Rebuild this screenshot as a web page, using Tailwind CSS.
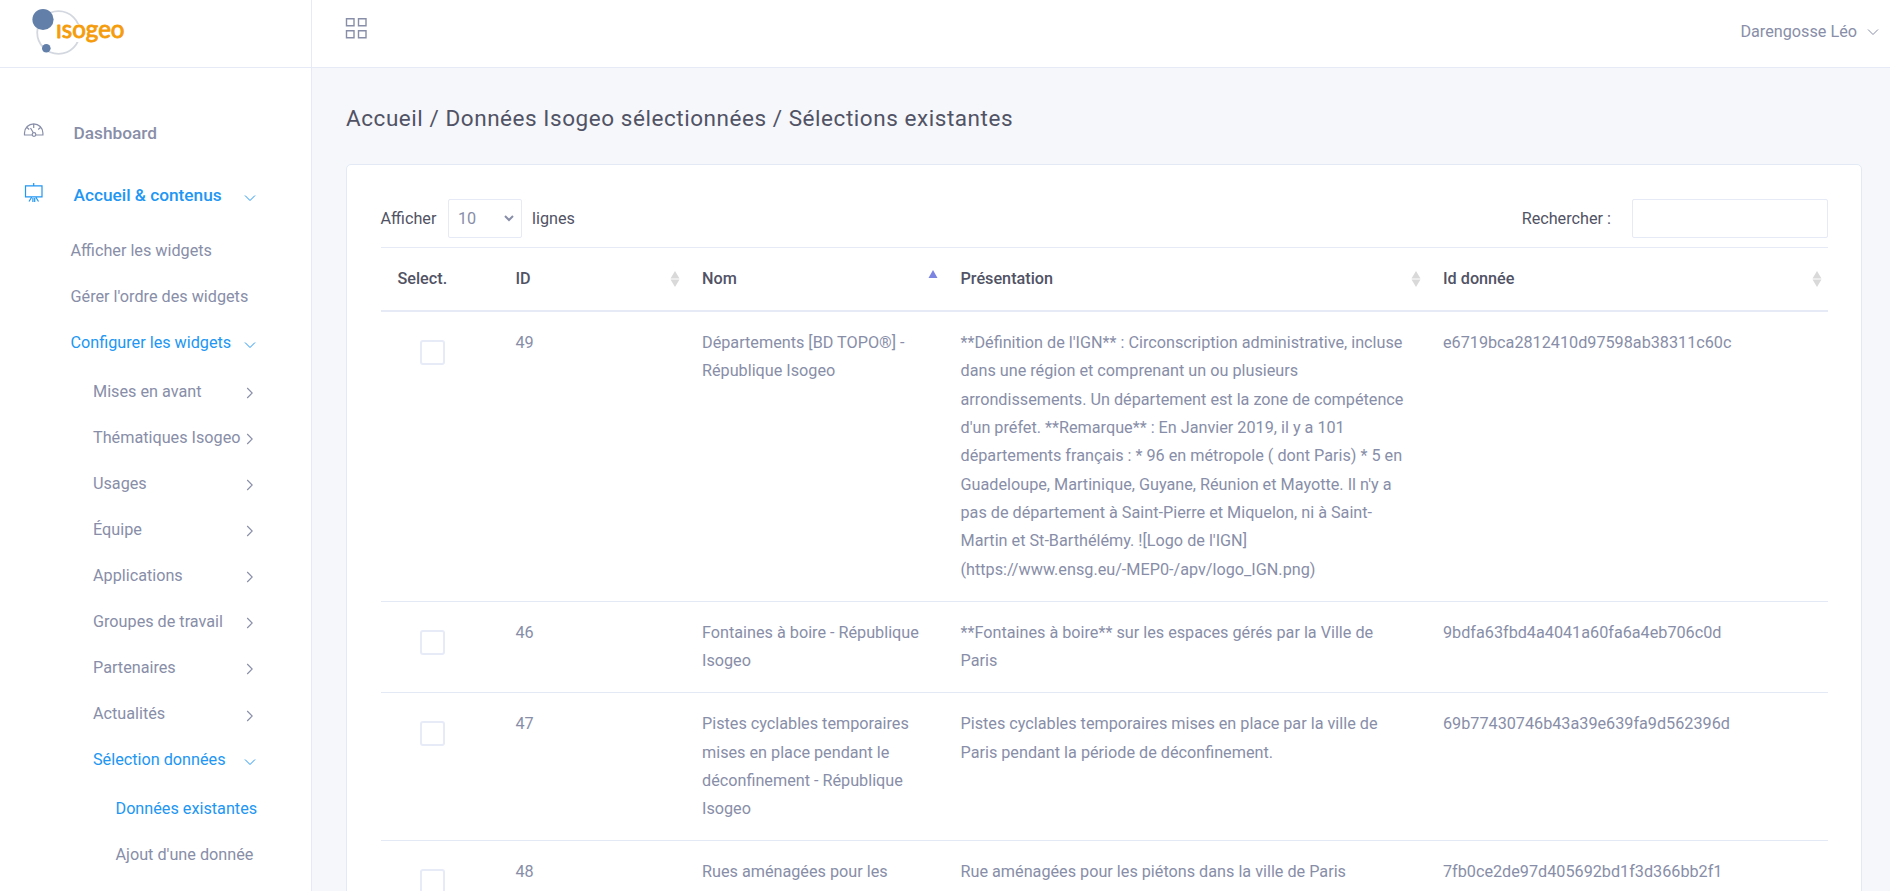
<!DOCTYPE html>
<html lang="fr">
<head>
<meta charset="utf-8">
<title>Sélections existantes</title>
<script src="https://cdn.jsdelivr.net/npm/@tailwindcss/browser@4"></script>
</head>
<body class="h-[891px] overflow-hidden bg-[#f5f7fb] font-['Roboto',sans-serif] text-[16.220px] text-[#888ea8]">
<svg class="hidden">
  <symbol id="down" viewBox="0 0 12 8"><path d="M1 1.5l5 5 5-5" fill="none" stroke="currentColor" stroke-width="1"/></symbol>
  <symbol id="right" viewBox="0 0 8 12"><path d="M1.2 1l5 5-5 5" fill="none" stroke="currentColor" stroke-width="1.1"/></symbol>
  <symbol id="sort" viewBox="0 0 10 18"><path d="M5 1l4.5 7.5h-9zM5 17L.5 9.500h9z" fill="#d9d9d9"/></symbol>
</svg>
<div class="flex h-full">
  <aside class="flex w-[312px] shrink-0 flex-col border-r border-[#e6e9f6] bg-white">
    <div class="h-[68px] shrink-0 border-b border-[#e6e9f6] pl-[28px] pt-[6px]">
      <svg class="h-[52px] w-[104px]" viewBox="28 6 104 52">
        <circle cx="58.500" cy="32.500" r="21.300" fill="none" stroke="#d3d7df" stroke-width="1.8"/>
        <path d="M56 24h72v18H56z" fill="#fff"/>
        <circle cx="43" cy="19.500" r="10.600" fill="#627fa9"/><circle cx="46.300" cy="48.300" r="4.300" fill="#627fa9"/>
        <text x="56" y="38.300" textLength="68.500" lengthAdjust="spacingAndGlyphs" font-family="Lato" font-weight="400" font-size="24.500" fill="#f59c0b" stroke="#f59c0b" stroke-width=".9" stroke-linejoin="round">ısogeo</text>
      </svg>
    </div>
    <nav class="flex flex-col">
      <a class="mt-[43px] flex h-[46px] items-center pl-[23px] text-[17.250px] font-medium">
        <svg class="-mt-[8px] h-[14px] w-[22px]" viewBox="0 0 22 14" fill="none" stroke="currentColor" stroke-width="1.2"><path d="M9 12H1.500v-2a9.200 9.200 0 0 1 18.400 0v2H13M10.700 1.500V5M4 4.500l2.200 2M17.400 4.500l-2.200 2M7.500 5l2.700 4.500"/><circle cx="11" cy="11.500" r="1.800"/></svg>
        <span class="ml-[28.500px]">Dashboard</span>
      </a>
      <a class="mt-[16px] flex h-[46px] items-center pl-[23px] text-[17.250px] font-medium text-[#2196f3]">
        <svg class="-mt-[7px] h-[20px] w-[22px]" viewBox="0 0 22 20" fill="none" stroke="currentColor" stroke-width="1.200"><path d="M2.500 2.900h16.500v11H2.500zM10.700 0v3M8.500 14.500l-2.500 4M9.900 15v4M11.700 15v4M13 14.500l2.500 4"/></svg>
        <span class="ml-[28.500px] w-[170.500px]">Accueil &amp; contenus</span><svg class="mt-[4px] h-[8px] w-[12px]"><use href="#down"/></svg>
      </a>
      <div class="mt-[9px] flex flex-col pl-[70.500px] [&>a]:flex [&>a]:h-[46.100px] [&>a]:items-center [&>a>svg]:mt-[4px]">
        <a>Afficher les widgets</a>
        <a>Gérer l'ordre des widgets</a>
        <a class="text-[#2196f3]"><span class="w-[173.500px]">Configurer les widgets</span><svg class="h-[8px] w-[12px]"><use href="#down"/></svg></a>
        <div class="mt-[2.700px] flex flex-col pl-[22.500px] [&>a]:flex [&>a]:h-[46.080px] [&>a]:items-center [&>a>span]:w-[152.500px] [&>a>span]:whitespace-nowrap [&>a>svg]:mt-[2px]">
          <a><span>Mises en avant</span><svg class="h-[12px] w-[8px]"><use href="#right"/></svg></a>
          <a><span>Thématiques Isogeo</span><svg class="h-[12px] w-[8px]"><use href="#right"/></svg></a>
          <a><span>Usages</span><svg class="h-[12px] w-[8px]"><use href="#right"/></svg></a>
          <a><span>Équipe</span><svg class="h-[12px] w-[8px]"><use href="#right"/></svg></a>
          <a><span>Applications</span><svg class="h-[12px] w-[8px]"><use href="#right"/></svg></a>
          <a><span>Groupes de travail</span><svg class="h-[12px] w-[8px]"><use href="#right"/></svg></a>
          <a><span>Partenaires</span><svg class="h-[12px] w-[8px]"><use href="#right"/></svg></a>
          <a><span>Actualités</span><svg class="h-[12px] w-[8px]"><use href="#right"/></svg></a>
          <a class="text-[#2196f3]"><span>Sélection données</span><svg class="-ml-[1.500px] h-[8px] w-[12px]"><use href="#down"/></svg></a>
          <div class="mt-[2.700px] flex flex-col pl-[22.500px] [&>a]:flex [&>a]:h-[46.100px] [&>a]:items-center">
            <a class="text-[#2196f3]">Données existantes</a>
            <a>Ajout d'une donnée</a>
          </div>
        </div>
      </div>
    </nav>
  </aside>
  <div class="flex min-w-0 flex-1 flex-col">
    <header class="flex h-[68px] shrink-0 items-start justify-between border-b border-[#e6e9f6] bg-white pl-[33px] pr-[11px]">
      <svg class="mt-[17px] h-[22px] w-[24px]" viewBox="0 0 24 22" fill="none" stroke="#888ea8" stroke-width="1.400"><path d="M1.500 1.700h7.500v7h-7.500zM13.500 1.700H21v7h-7.500zM1.500 13.700h7.500v7h-7.500zM13.500 13.700H21v7h-7.500z"/></svg>
      <div class="mt-[20px] flex items-center"><span>Darengosse Léo</span><svg class="ml-[10px] -mt-px h-[8px] w-[12px]"><use href="#down"/></svg></div>
    </header>
    <main class="flex flex-1 flex-col pl-[34px] pr-[28px]">
      <h1 class="mt-[34px] h-[62px] text-[22.500px] leading-[32px] tracking-[0.550px] text-[#515365]">Accueil / Données Isogeo sélectionnées / Sélections existantes</h1>
      <section class="h-[760px] shrink-0 rounded-[5px] border border-[#e3eaf5] bg-white px-[33.500px] pt-[34px]">
        <div class="flex h-[39px] items-center justify-between text-[#515365]">
          <div class="flex items-center"><span class="w-[67.500px] pt-px">Afficher</span>
            <div class="flex h-[39px] w-[74px] items-center justify-between rounded-[2px] border border-[#e6e9f6] pl-[9px] pr-[7px] text-[#888ea8]"><span class="pt-px">10</span><svg class="h-[7px] w-[10px]" viewBox="0 0 10 7"><path d="M1 1l4 4 4-4" fill="none" stroke="currentColor" stroke-width="2"/></svg></div>
            <span class="ml-[10px] pt-px">lignes</span></div>
          <div class="flex items-center"><span class="pt-px">Rechercher :</span><div class="ml-[20.500px] h-[39px] w-[196px] rounded-[2px] border border-[#e6e9f6]"></div></div>
        </div>
        <table class="mt-[9px] w-[1447px] table-fixed border-separate border-spacing-0 text-left leading-[28.350px] [&_td]:border-b [&_td]:border-[#e3eaf5] [&_td]:pl-[17px] [&_td]:pb-[16.700px] [&_td]:pt-[17px] [&_td]:align-top [&_th]:border-b-2 [&_th]:border-t [&_th]:border-[#e6e9f6] [&_th]:pl-[17px] [&_th]:pr-[5.500px] [&_th]:font-medium">
          <colgroup><col class="w-[118px]"><col class="w-[186.500px]"><col class="w-[258.500px]"><col class="w-[482.500px]"><col></colgroup>
          <thead class="text-[#515365]"><tr class="h-[65px]">
            <th>Select.</th>
            <th><div class="flex items-center justify-between">ID<svg class="h-[18px] w-[10px]"><use href="#sort"/></svg></div></th>
            <th><div class="flex items-center justify-between">Nom<svg class="h-[18px] w-[10px]" viewBox="0 0 10 18"><path d="M5 0l4.500 8h-9z" fill="#7b84e0"/></svg></div></th>
            <th><div class="flex items-center justify-between">Présentation<svg class="h-[18px] w-[10px]"><use href="#sort"/></svg></div></th>
            <th><div class="flex items-center justify-between">Id donnée<svg class="h-[18px] w-[10px]"><use href="#sort"/></svg></div></th>
          </tr></thead>
          <tbody>
            <tr><td><div class="ml-[22.300px] mt-[11px] size-[25px] rounded-[3px] border-2 border-[#e6ebf7]"></div></td><td>49</td><td>Départements [BD TOPO®] -<br>République Isogeo</td><td class="whitespace-nowrap">**Définition de l'IGN** : Circonscription administrative, incluse<br>dans une région et comprenant un ou plusieurs<br>arrondissements. Un département est la zone de compétence<br>d'un préfet. **Remarque** : En Janvier 2019, il y a 101<br>départements français : * 96 en métropole ( dont Paris) * 5 en<br>Guadeloupe, Martinique, Guyane, Réunion et Mayotte. Il n'y a<br>pas de département à Saint-Pierre et Miquelon, ni à Saint-<br>Martin et St-Barthélémy. ![Logo de l'IGN]<br>(https://www.ensg.eu/-MEP0-/apv/logo_IGN.png)</td><td>e6719bca2812410d97598ab38311c60c</td></tr>
            <tr><td><div class="ml-[22.300px] mt-[11px] size-[25px] rounded-[3px] border-2 border-[#e6ebf7]"></div></td><td>46</td><td class="whitespace-nowrap">Fontaines à boire - République<br>Isogeo</td><td>**Fontaines à boire** sur les espaces gérés par la Ville de<br>Paris</td><td>9bdfa63fbd4a4041a60fa6a4eb706c0d</td></tr>
            <tr><td><div class="ml-[22.300px] mt-[11px] size-[25px] rounded-[3px] border-2 border-[#e6ebf7]"></div></td><td>47</td><td class="whitespace-nowrap">Pistes cyclables temporaires<br>mises en place pendant le<br>déconfinement - République<br>Isogeo</td><td>Pistes cyclables temporaires mises en place par la ville de<br>Paris pendant la période de déconfinement.</td><td>69b77430746b43a39e639fa9d562396d</td></tr>
            <tr class="h-[91px]"><td><div class="ml-[22.300px] mt-[11px] size-[25px] rounded-[3px] border-2 border-[#e6ebf7]"></div></td><td>48</td><td>Rues aménagées pour les</td><td>Rue aménagées pour les piétons dans la ville de Paris</td><td>7fb0ce2de97d405692bd1f3d366bb2f1</td></tr>
          </tbody>
        </table>
      </section>
    </main>
  </div>
</div>
</body>
</html>
